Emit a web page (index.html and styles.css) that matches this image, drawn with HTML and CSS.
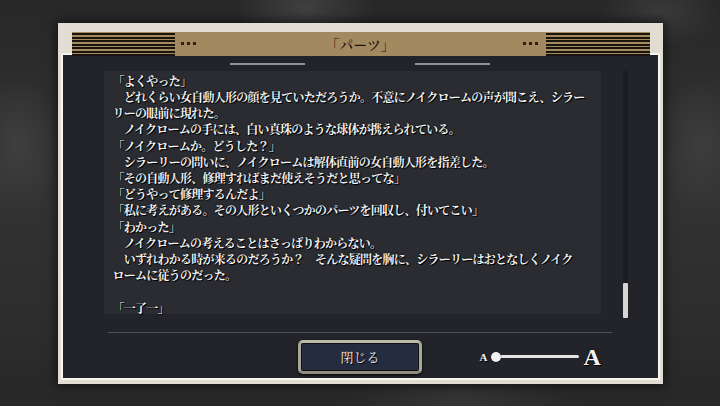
FILE: index.html
```html
<!DOCTYPE html>
<html lang="ja">
<head>
<meta charset="utf-8">
<title>パーツ</title>
<link rel="stylesheet" href="styles.css">
</head>
<body>
<div class="frame">
  <div class="header">
    <div class="stripes"></div>
    <span class="dots"></span>
    <div class="title">「パーツ」</div>
    <span class="dots"></span>
    <div class="stripes stripes-right"></div>
  </div>
  <div class="panel">
    <div class="tabs"><span class="tab"></span><span class="tab"></span></div>
    <div class="content">
      <div class="textbox">
        <p class="line">「よくやった」</p>
        <p class="line">　どれくらい女自動人形の顔を見ていただろうか。不意にノイクロームの声が聞こえ、シラー</p>
        <p class="line">リーの眼前に現れた。</p>
        <p class="line">　ノイクロームの手には、白い真珠のような球体が携えられている。</p>
        <p class="line">「ノイクロームか。どうした？」</p>
        <p class="line">　シラーリーの問いに、ノイクロームは解体直前の女自動人形を指差した。</p>
        <p class="line">「その自動人形、修理すればまだ使えそうだと思ってな」</p>
        <p class="line">「どうやって修理するんだよ」</p>
        <p class="line">「私に考えがある。その人形といくつかのパーツを回収し、付いてこい」</p>
        <p class="line">「わかった」</p>
        <p class="line">　ノイクロームの考えることはさっぱりわからない。</p>
        <p class="line">　いずれわかる時が来るのだろうか？　そんな疑問を胸に、シラーリーはおとなしくノイク</p>
        <p class="line">ロームに従うのだった。</p>
        <p class="line"> </p>
        <p class="line">「一了一」</p>
      </div>
      <div class="scroll"><div class="thumb"></div></div>
    </div>
    <div class="sep"></div>
    <div class="footer">
      <button class="close">閉じる</button>
      <div class="slider">
        <span class="a-small">A</span>
        <span class="track-wrap"><span class="track"></span><span class="knob"></span></span>
        <span class="a-big">A</span>
      </div>
    </div>
  </div>
</div>
</body>
</html>
```
FILE: styles.css
```css
html, body {
  margin: 0;
  padding: 0;
}
body {
  width: 720px;
  height: 406px;
  overflow: hidden;
  display: flex;
  align-items: center;
  justify-content: center;
  font-family: "Noto Serif CJK JP", "Noto Sans CJK JP", sans-serif;
  background:
    radial-gradient(ellipse 70px 40px at 305px 8px, #404040, rgba(64,64,64,0)),
    radial-gradient(ellipse 60px 35px at 660px 12px, #3a3a3a, rgba(58,58,58,0)),
    radial-gradient(ellipse 45px 70px at 18px 145px, #3f3f3f, rgba(63,63,63,0)),
    radial-gradient(ellipse 45px 70px at 702px 145px, #3d3d3d, rgba(61,61,61,0)),
    radial-gradient(ellipse 120px 30px at 460px 400px, #353535, rgba(53,53,53,0)),
    linear-gradient(#282828, #333333 45%, #2d2d2d 80%, #272727);
}
.frame {
  width: 605px;
  height: 361px;
  box-sizing: border-box;
  padding: 9px 5px 6px;
  background: #e2ddd3;
  box-shadow: 0 0 10px 2px rgba(0, 0, 0, 0.55);
  display: flex;
  flex-direction: column;
}
.header {
  position: relative;
  z-index: 1;
  height: 24px;
  margin: 0 8px 0 9px;
  background: #a38960;
  display: flex;
  align-items: center;
  flex: none;
}
.stripes {
  width: 103px;
  height: 100%;
  flex: none;
  background: repeating-linear-gradient(to bottom, #a38960 0 1.4px, #1b140d 1.4px 3.43px);
}
.stripes-right {
  width: 104px;
}
.dots {
  flex: none;
  width: 17px;
  height: 3px;
  margin: 0 6px;
  background: radial-gradient(circle at 1.5px 1.5px, #2b2117 1.5px, rgba(43,33,23,0) 2px) 0 0 / 6px 3px repeat-x;
}
.title {
  flex: 1;
  text-align: center;
  font-size: 14px;
  font-weight: 500;
  line-height: 24px;
  color: #17120b;
}
.panel {
  margin-top: -1px;
  height: 323px;
  box-sizing: border-box;
  padding: 8px 0 4px;
  background: #222429;
  box-shadow: 0 0 0 2px #f7f5f0;
  display: flex;
  flex-direction: column;
  flex: none;
}
.tabs {
  display: flex;
  justify-content: center;
  gap: 110px;
  height: 2px;
}
.tab {
  width: 75px;
  height: 2px;
  background: #8e9095;
}
.content {
  display: flex;
  margin-top: 6px;
  height: 247px;
  padding-left: 41px;
}
.textbox {
  width: 497px;
  height: 243px;
  box-sizing: border-box;
  padding: 2.4px 0 0 9px;
  background: #2a2c31;
}
.line {
  margin: 0;
  height: 16.2px;
  line-height: 16.2px;
  font-size: 12px;
  letter-spacing: -0.75px;
  font-weight: 700;
  white-space: pre;
  color: #f3f3f3;
  text-shadow: 1px 1px 0 #000, 0 0 2px #000;
}
.scroll {
  width: 5px;
  height: 247px;
  margin-left: 22px;
  background: #1b1c20;
  display: flex;
  flex-direction: column;
  justify-content: flex-end;
}
.thumb {
  height: 35px;
  background: #d6d6d6;
  border-radius: 1px;
}
.sep {
  height: 1px;
  margin: 14px 46px 0 45px;
  background: #4d4f54;
}
.footer {
  display: grid;
  grid-template-columns: 1fr 124px 1fr;
  margin-top: 7px;
  height: 34px;
}
.close {
  grid-column: 2;
  height: 34px;
  padding: 0;
  border: 3px solid #a9a598;
  border-top-color: #bdb9ac;
  border-bottom-color: #8f8c80;
  border-radius: 5px;
  background: #252c3f;
  box-shadow: inset 0 0 0 1px #0f1115, 0 1px 3px #000;
  color: #e9e9e9;
  font: 400 13px "Noto Serif CJK JP", "Noto Sans CJK JP", sans-serif;
  text-shadow: 1px 1px 0 #000;
}
.slider {
  grid-column: 3;
  display: flex;
  align-items: center;
  margin-left: 57.5px;
}
.a-small {
  font: 700 11px "Liberation Serif", serif;
  color: #f2f2f2;
  text-shadow: 1px 1px 0 #000;
  width: 8px;
  margin-right: 3px;
}
.track-wrap {
  position: relative;
  width: 88px;
  height: 10px;
  display: flex;
  align-items: center;
}
.track {
  margin-left: 5px;
  width: 83px;
  height: 3px;
  border-radius: 2px;
  background: #e4e4e4;
}
.knob {
  position: absolute;
  left: 0;
  top: 0;
  width: 10px;
  height: 10px;
  border-radius: 50%;
  background: #f2f2f2;
  box-shadow: 0 0 1px #000;
}
.a-big {
  margin-left: 5px;
  font: 700 24px "Liberation Serif", serif;
  color: #f2f2f2;
  text-shadow: 1px 1px 0 #000, 0 0 2px #000;
  line-height: 24px;
}
```
